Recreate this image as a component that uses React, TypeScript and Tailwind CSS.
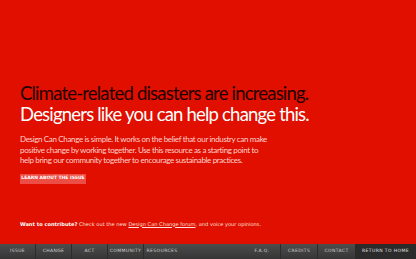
import React from "react";

const navLeft = ["Issue", "Change", "Act", "Community", "Resources"];
const navRight = ["F.A.Q.", "Credits", "Contact"];

export default function App() {
  return (
    <div className="flex h-[259px] w-[416px] flex-col overflow-hidden bg-[#e00f00] font-['Lato',sans-serif]">
      {/* Intro */}
      <div className="flex-1 pl-[20px] pt-[83px]">
        <h1 className="text-[18.5px] leading-[20.5px] tracking-[-0.8px]">
          <span className="block text-[#1d0200]">Climate-related disasters are increasing.</span>
          <span className="block text-white">Designers like you can help change this.</span>
        </h1>
        <p className="mt-[10px] w-[252px] text-[8px] leading-[10.5px] tracking-[-0.35px] text-[#ffd2cc]">
          Design Can Change is simple. It works on the belief that our industry can make
          positive change by working together. Use this resource as a starting point to
          help bring our community together to encourage sustainable practices.
        </p>
        <button className="mt-[8px] flex h-[10px] w-[66px] items-center justify-center bg-[#ec4d45] font-['DejaVu_Sans',sans-serif] text-[4.5px] font-bold uppercase text-white">
          Learn about the issue
        </button>
        <p className="mt-[36px] font-['DejaVu_Sans',sans-serif] text-[5.1px] leading-[8px] text-[#ffe0dc]">
          <span className="font-bold text-white">Want to contribute?</span> Check out the new{" "}
          <span className="underline">Design Can Change forum</span>, and voice your opinions.
        </p>
      </div>

      {/* Navigation */}
      <nav className="flex h-[15px] bg-gradient-to-b from-[#4d4d4d] to-[#363636] font-['DejaVu_Sans',sans-serif] text-[4.5px] uppercase tracking-[0.4px] text-[#d0d0d0]">
        {navLeft.map((n, i) => (
          <div
            key={n}
            className={`flex w-[36px] items-center justify-center ${i < 4 ? "border-r border-[#2c2c2c]" : ""}`}
          >
            {n}
          </div>
        ))}
        <div className="flex-1" />
        {navRight.map((n, i) => (
          <div
            key={n}
            className={`flex w-[37px] items-center justify-center ${i < 2 ? "border-r border-[#2c2c2c]" : ""}`}
          >
            {n}
          </div>
        ))}
        <div className="flex w-[61px] items-center justify-center bg-[#2b2b2b] text-[#e0e0e0]">
          Return to home
        </div>
      </nav>
    </div>
  );
}
